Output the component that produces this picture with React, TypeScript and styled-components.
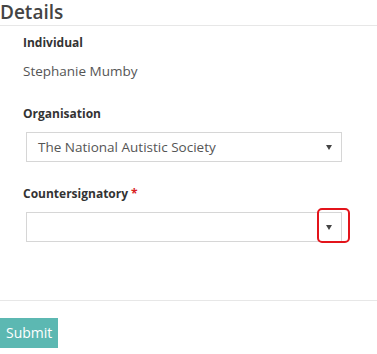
import styled, { createGlobalStyle } from "styled-components";

const GlobalStyle = createGlobalStyle`
  html, body {
    margin: 0;
    padding: 0;
    background: #ffffff;
  }
  body {
    font-family: "Open Sans", "Liberation Sans", sans-serif;
    color: #555555;
  }
`;

const Page = styled.div`
  width: 377px;
  height: 354px;
  overflow: hidden;
`;

const Heading = styled.h2`
  margin: 0;
  height: 25px;
  font-size: 19px;
  line-height: 25px;
  font-weight: 600;
  color: #444444;
  border-bottom: 1px solid #e7e7e7;
`;

const FormBody = styled.div`
  padding: 8px 0 0 23px;
  width: 319px;
  height: 266px;
  box-sizing: content-box;
`;

const Field = styled.div<{ $gap?: number }>`
  margin-bottom: ${(p) => p.$gap ?? 0}px;
`;

const Label = styled.div`
  font-size: 12px;
  line-height: 17px;
  font-weight: 700;
  color: #333333;
  margin-bottom: 10px;
`;

const Required = styled.span`
  color: #d9231f;
  margin-left: 3px;
`;

const Value = styled.div`
  font-size: 13.5px;
  line-height: 21px;
  color: #555555;
`;

const SelectWrap = styled.div`
  position: relative;
  margin-left: 3px;
`;

const SelectBox = styled.div`
  height: 30px;
  box-sizing: border-box;
  border: 1px solid #d6d6d6;
  display: flex;
  align-items: center;
  justify-content: space-between;
  padding: 0 9px 0 11px;
  font-size: 13.5px;
  color: #555555;
`;

const Caret = styled.span`
  width: 0;
  height: 0;
  border-left: 3px solid transparent;
  border-right: 3px solid transparent;
  border-top: 5px solid #444444;
`;

const Highlight = styled.div`
  position: absolute;
  top: -4px;
  right: -8px;
  width: 33px;
  height: 35px;
  box-sizing: border-box;
  border: 2px solid #e3141b;
  border-radius: 5px;
`;

const Footer = styled.div`
  border-top: 1px solid #e7e7e7;
  padding-top: 17px;
`;

const SubmitButton = styled.button`
  height: 30px;
  padding: 0 6px;
  border: none;
  border-radius: 0;
  background: #5cb8b2;
  color: #ffffff;
  font-family: "Open Sans", "Liberation Sans", sans-serif;
  font-size: 14px;
  line-height: 30px;
  cursor: pointer;
`;

export default function App() {
  return (
    <Page>
      <GlobalStyle />
      <Heading>Details</Heading>
      <FormBody>
        <Field $gap={23}>
          <Label>Individual</Label>
          <Value>Stephanie Mumby</Value>
        </Field>
        <Field $gap={23}>
          <Label>Organisation</Label>
          <SelectWrap>
            <SelectBox>
              <span>The National Autistic Society</span>
              <Caret />
            </SelectBox>
          </SelectWrap>
        </Field>
        <Field>
          <Label>
            Countersignatory<Required>*</Required>
          </Label>
          <SelectWrap>
            <SelectBox>
              <span />
              <Caret />
            </SelectBox>
            <Highlight />
          </SelectWrap>
        </Field>
      </FormBody>
      <Footer>
        <SubmitButton type="button">Submit</SubmitButton>
      </Footer>
    </Page>
  );
}
